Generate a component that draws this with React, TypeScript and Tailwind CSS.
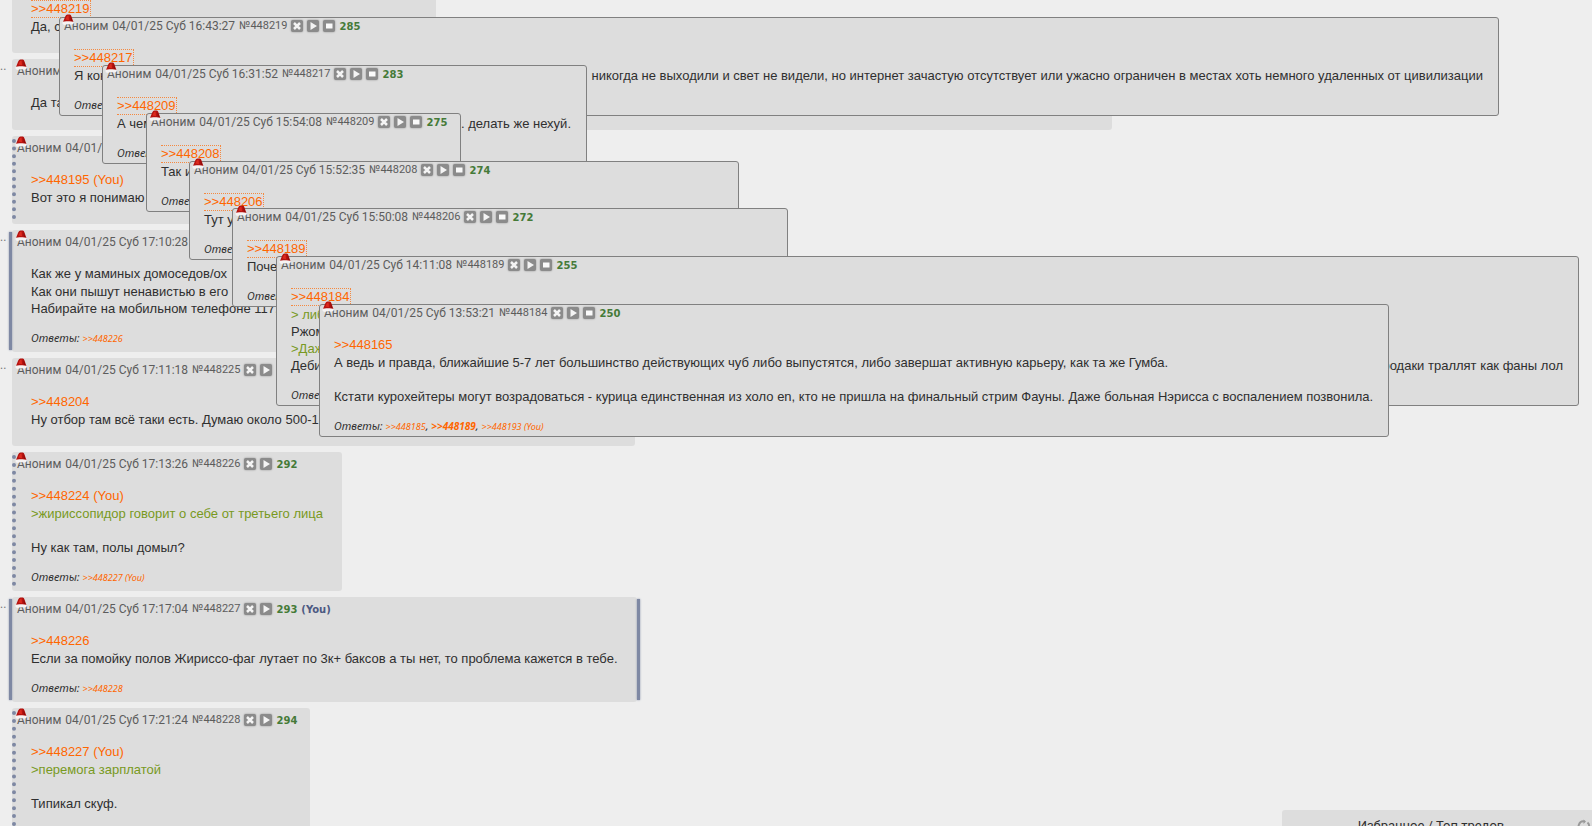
import clsx from "clsx";
import type { ReactNode } from "react";

type Reply = { id: string; you?: boolean; active?: boolean };

type Line = {
  text?: string;
  // end of a long line, aligned to the right side of the post
  tail?: string;
  quote?: boolean;
};

type Post = {
  id: string;
  time: string;
  count: string;
  you?: boolean;
  mark?: "dotted" | "solid";
  dots?: boolean;
  replyTo?: Reply;
  lines: Line[];
  replies?: Reply[];
  className?: string;
};

const thread: Post[] = [
  {
    id: "448222",
    time: "17:01:12",
    count: "288",
    replyTo: { id: "448219", active: true },
    lines: [{ text: "Да, с" }],
    className: "w-[424px]",
  },
  {
    id: "448221",
    time: "17:03:40",
    count: "289",
    dots: true,
    lines: [{ text: "Да та" }],
    className: "w-[1100px]",
  },
  {
    id: "448223",
    time: "17:08:05",
    count: "290",
    mark: "dotted",
    replyTo: { id: "448195", you: true },
    lines: [{ text: "Вот это я понимаю" }],
    className: "w-[290px]",
  },
  {
    id: "448224",
    time: "17:10:28",
    count: "290",
    mark: "solid",
    dots: true,
    lines: [
      { text: "Как же у маминых домоседов/ох" },
      { text: "Как они пышут ненавистью в его" },
      { text: "Набирайте на мобильном телефоне 117," },
    ],
    replies: [{ id: "448226" }],
    className: "w-[290px]",
  },
  {
    id: "448225",
    time: "17:11:18",
    count: "291",
    dots: true,
    replyTo: { id: "448204" },
    lines: [{ text: "Ну отбор там всё таки есть. Думаю около 500-1" }],
    className: "w-[623px]",
  },
  {
    id: "448226",
    time: "17:13:26",
    count: "292",
    mark: "dotted",
    replyTo: { id: "448224", you: true },
    lines: [
      { text: ">жириссопидор говорит о себе от третьего лица", quote: true },
      {},
      { text: "Ну как там, полы домыл?" },
    ],
    replies: [{ id: "448227", you: true }],
  },
  {
    id: "448227",
    time: "17:17:04",
    count: "293",
    you: true,
    mark: "solid",
    dots: true,
    replyTo: { id: "448226" },
    lines: [
      {
        text: "Если за помойку полов Жириссо-фаг лутает по 3к+ баксов а ты нет, то проблема кажется в тебе.",
      },
    ],
    replies: [{ id: "448228" }],
  },
  {
    id: "448228",
    time: "17:21:24",
    count: "294",
    mark: "dotted",
    replyTo: { id: "448227", you: true },
    lines: [
      { text: ">перемога зарплатой", quote: true },
      {},
      { text: "Типикал скуф." },
    ],
    replies: [{ id: "448229" }],
    className: "w-[298px]",
  },
];

// Opened previews, from the bottom one to the top one
const previews: Post[] = [
  {
    id: "448219",
    time: "16:43:27",
    count: "285",
    replyTo: { id: "448217", active: true },
    lines: [
      {
        text: "Я кон",
        tail: "никогда не выходили и свет не видели, но интернет зачастую отсутствует или ужасно ограничен в местах хоть немного удаленных от цивилизации",
      },
    ],
    replies: [{ id: "448222" }],
    className: "left-[59px] top-[17px] w-[1440px]",
  },
  {
    id: "448217",
    time: "16:31:52",
    count: "283",
    replyTo: { id: "448209", active: true },
    lines: [{ text: "А чем", tail: ". делать же нехуй." }],
    replies: [{ id: "448219" }],
    className: "left-[102px] top-[65px] w-[485px]",
  },
  {
    id: "448209",
    time: "15:54:08",
    count: "275",
    replyTo: { id: "448208", active: true },
    lines: [{ text: "Так и" }],
    replies: [{ id: "448217" }],
    className: "left-[146px] top-[113px] w-[315px]",
  },
  {
    id: "448208",
    time: "15:52:35",
    count: "274",
    replyTo: { id: "448206", active: true },
    lines: [{ text: "Тут у" }],
    replies: [{ id: "448209" }],
    className: "left-[189px] top-[161px] w-[550px]",
  },
  {
    id: "448206",
    time: "15:50:08",
    count: "272",
    replyTo: { id: "448189", active: true },
    lines: [{ text: "Почем" }],
    replies: [{ id: "448208" }],
    className: "left-[232px] top-[208px] w-[556px]",
  },
  {
    id: "448189",
    time: "14:11:08",
    count: "255",
    replyTo: { id: "448184", active: true },
    lines: [
      { text: "> либо", quote: true },
      { text: "Ржом" },
      { text: ">Даже", quote: true },
      { text: "Дебил", tail: "родаки траллят как фаны лол" },
    ],
    replies: [{ id: "448206" }],
    className: "left-[276px] top-[256px] w-[1303px]",
  },
  {
    id: "448184",
    time: "13:53:21",
    count: "250",
    replyTo: { id: "448165" },
    lines: [
      {
        text: "А ведь и правда, ближайшие 5-7 лет большинство действующих чуб либо выпустятся, либо завершат активную карьеру, как та же Гумба.",
      },
      {},
      {
        text: "Кстати курохейтеры могут возрадоваться - курица единственная из холо en, кто не пришла на финальный стрим Фауны. Даже больная Нэрисса с воспалением позвонила.",
      },
    ],
    replies: [
      { id: "448185" },
      { id: "448189", active: true },
      { id: "448193", you: true },
    ],
    className: "left-[319px] top-[304px]",
  },
];

const SantaHat = ({ className }: { className: string }) => (
  <svg
    viewBox="0 0 12 12"
    aria-hidden="true"
    className={clsx("pointer-events-none absolute size-3", className)}
  >
    <path d="M1 8 3.2 2.500Q4 .8 5.500.6h2.300q1.200.3 1.600 1.600L11.400 8Z" fill="#b5120f" />
    <path d="M3.400 5.500 5 2l1.600-.4L7 6.200Z" fill="#dc2a1e" />
    <path d="M8.400 1.600 10.600 7.400 8.800 6.800Z" fill="#8a0d0c" />
    <path
      d="M.8 7.800Q3.500 6.800 6 7.300q2.800-.3 5 .5 1 .9.500 2-.8.900-2.800.6Q6 9.600 3.400 10.800 1.400 11.200.7 10.100.1 8.800.8 7.800Z"
      fill="#f6f3f3"
    />
  </svg>
);

const IconButton = ({
  label,
  children,
}: {
  label: string;
  children: ReactNode;
}) => (
  <button
    type="button"
    aria-label={label}
    className="size-3 shrink-0 rounded-[2px] bg-[#8b8b8b] shadow-[0_0_2px_#8b8b8b]"
  >
    <svg viewBox="0 0 12 12" className="block size-3" aria-hidden="true">
      {children}
    </svg>
  </button>
);

const PostHeader = ({ post, popup }: { post: Post; popup?: boolean }) => (
  <div className="flex h-5 items-center gap-1 whitespace-nowrap text-[12px] text-[#5c5c5c]">
    <span>Аноним</span>
    <span>04/01/25 Суб {post.time}</span>
    <a href={`#${post.id}`} className="text-[11px]">
      №{post.id}
    </a>
    <IconButton label="Скрыть">
      <path d="m3 3 6 6m0-6L3 9" stroke="#f4f4f4" strokeWidth="2.500" />
    </IconButton>
    <IconButton label="Ответить">
      <path d="M3.500 2v8L10 6Z" fill="#f4f4f4" />
    </IconButton>
    {popup && (
      <IconButton label="Закрепить">
        <path d="M3 3.500h6.500v5H3Z" fill="#fafafa" />
      </IconButton>
    )}
    <span className="font-['DejaVu_Sans',sans-serif] text-[10px] font-bold text-[#457a38]">
      {post.count}
    </span>
    {post.you && (
      <span className="font-['DejaVu_Sans',sans-serif] text-[10px] font-bold text-[#4c5982]">
        (You)
      </span>
    )}
  </div>
);

const PostBody = ({ post }: { post: Post }) => (
  <>
    <div className="mb-3 whitespace-nowrap font-['Liberation_Sans',sans-serif] text-[13px] leading-[17px]">
      {post.replyTo && (
        <div className="flex h-[18px]">
          <a
            href={`#${post.replyTo.id}`}
            className={clsx(
              "text-[#ff6600]",
              post.replyTo.active
                ? "border-y border-r border-dotted border-[#ff6600]/70 leading-[16px]"
                : "leading-[18px]",
            )}
          >
            &gt;&gt;{post.replyTo.id}
            {post.replyTo.you && " (You)"}
          </a>
        </div>
      )}
      {post.lines.map((line, i) => (
        <p
          key={i}
          className={clsx(
            "flex justify-between",
            i === 0 && !post.replyTo ? "h-[18px]" : "h-[17px]",
            line.quote && "text-[#789922]",
          )}
        >
          <span>{line.text}</span>
          {line.tail && <span>{line.tail}</span>}
        </p>
      ))}
    </div>
    {post.replies && (
      <div className="h-[17px] whitespace-nowrap font-['Noto_Sans',sans-serif] text-[11px] italic leading-[17px]">
        Ответы:{" "}
        {post.replies.map((reply, i) => (
          <span key={reply.id}>
            {i > 0 && ", "}
            <a
              href={`#${reply.id}`}
              className={clsx(
                "text-[#ff6600]",
                reply.active ? "text-[10px] font-bold" : "text-[9px]",
              )}
            >
              &gt;&gt;{reply.id}
              {reply.you && " (You)"}
            </a>
          </span>
        ))}
      </div>
    )}
  </>
);

const ThreadPost = ({ post }: { post: Post }) => (
  <article
    className={clsx(
      "relative rounded-[3px] bg-[#ddd] pb-[6px] pl-[5px] pr-[19px] pt-[2px]",
      post.className,
    )}
  >
    {post.dots && (
      <span className="absolute -left-3 top-0 text-[12px] leading-[14px] text-[#777]">
        ..
      </span>
    )}
    {post.mark === "dotted" && (
      <span className="absolute bottom-[5px] left-0 top-[3px] border-l-4 border-dotted border-[#7e88a3]" />
    )}
    {post.mark === "solid" && (
      <>
        <span className="absolute -left-[3px] bottom-[2px] top-[2px] w-[3px] bg-[#7e88a3] shadow-[0_0_2px_#7e88a3]" />
        <span className="absolute -right-[3px] bottom-[2px] top-[2px] w-[3px] bg-[#7e88a3] shadow-[0_0_2px_#7e88a3]" />
      </>
    )}
    <PostHeader post={post} />
    <SantaHat className="left-[3px] top-0" />
    <div className="pl-[14px] pt-[13px]">
      <PostBody post={post} />
    </div>
  </article>
);

const PreviewPost = ({ post }: { post: Post }) => (
  <article
    className={clsx(
      "absolute rounded-[3px] border border-[#808080] bg-[#ddd] pb-[2px] pl-1 pr-[15px]",
      post.className,
    )}
  >
    <div className="-mt-[2px]">
      <PostHeader post={post} popup />
    </div>
    <SantaHat className="-top-1 left-[2px]" />
    <div className="pl-[10px] pt-[13px]">
      <PostBody post={post} />
    </div>
  </article>
);

const FavoritesPanel = () => (
  <aside className="absolute right-0 top-[810px] flex h-8 w-[310px] items-start rounded-tl-[3px] bg-[#ddd] pr-3 pt-[7px]">
    <div className="flex-1 text-center text-[13px] leading-[18px]">
      <a href="#favorites">Избранное</a> / <a href="#top">Топ тредов</a>
    </div>
    <button type="button" aria-label="Обновить" className="absolute right-px top-[9px]">
      <svg viewBox="0 0 14 14" className="size-[14px]" fill="none" stroke="#999" strokeWidth="2">
        <path d="M7.500 2.500A4.800 4.800 0 0 0 4 11.300M10.500 3.500a4.800 4.800 0 0 1-1 8" />
        <path d="M6.500.5 9 2.600 6.500 5Z" fill="#999" stroke="none" />
      </svg>
    </button>
  </aside>
);

const App = () => (
  <main className="relative h-screen overflow-hidden bg-[#eee] font-['Roboto','Noto_Sans',sans-serif] text-[#2f2f2f]">
    <div className="-mt-[35px] flex flex-col items-start gap-[6px] pl-3">
      {thread.map((post) => (
        <ThreadPost key={post.id} post={post} />
      ))}
    </div>
    {previews.map((post) => (
      <PreviewPost key={post.id} post={post} />
    ))}
    <FavoritesPanel />
  </main>
);

export default App;
